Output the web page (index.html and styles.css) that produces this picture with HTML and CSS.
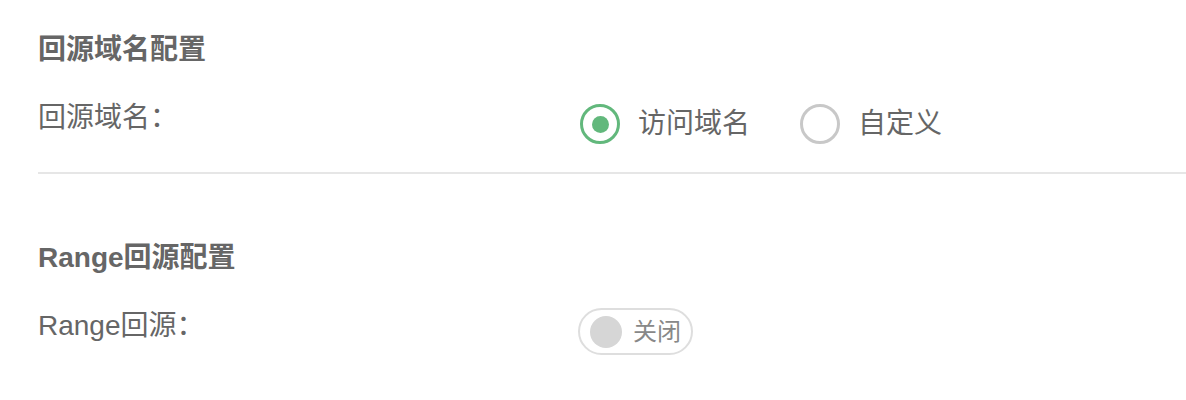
FILE: index.html
```html
<!DOCTYPE html>
<html lang="zh-CN">
<head>
  <meta charset="UTF-8">
  <meta name="viewport" content="width=device-width, initial-scale=1.0">
  <title>回源配置</title>
  <link rel="stylesheet" href="styles.css">
</head>
<body>

<div class="page">
  <!-- 回源域名 -->
  <div class="section">
    <div class="section-title">回源域名配置</div>
    <div class="form-row">
      <div class="form-label">回源域名：</div>
      <div class="form-control radios">
        <label class="radio checked">
          <span class="radio-dot"></span>
          <span class="radio-text">访问域名</span>
        </label>
        <label class="radio">
          <span class="radio-dot"></span>
          <span class="radio-text">自定义</span>
        </label>
      </div>
    </div>
  </div>

  <div class="divider"></div>

  <!-- Range回源 -->
  <div class="section">
    <div class="section-title">Range回源配置</div>
    <div class="form-row">
      <div class="form-label">Range回源：</div>
      <div class="form-control switch-wrap">
        <span class="switch">
          <span class="switch-knob"></span>
          <span class="switch-text">关闭</span>
        </span>
      </div>
    </div>
  </div>
</div>

</body>
</html>
```

FILE: styles.css
```css
body {
  margin: 0;
  padding: 0;
  background: #fff;
  font-family: "Liberation Sans", "Noto Sans CJK SC", sans-serif;
  color: #666;
}
.page {
  padding: 30px 0 0 38px;
}
.section-title {
  font-size: 28px;
  line-height: 40px;
  font-weight: bold;
  color: #666;
}
.form-row {
  display: flex;
  align-items: flex-start;
  margin-top: 28px;
}
.form-label {
  width: 542px;
  font-size: 28px;
  line-height: 40px;
  color: #666;
}
.divider {
  height: 2px;
  background: #e6e6e6;
  margin: 28px 0 64px;
}

/* 单选 */
.radios {
  display: flex;
  align-items: center;
  margin-top: 6px;
}
.radio {
  display: flex;
  align-items: center;
  margin-right: 50px;
  cursor: pointer;
}
.radio-dot {
  width: 40px;
  height: 40px;
  box-sizing: border-box;
  border: 3px solid #c8c8c8;
  border-radius: 50%;
  display: flex;
  align-items: center;
  justify-content: center;
}
.radio.checked .radio-dot {
  border-color: #62b87c;
}
.radio.checked .radio-dot::after {
  content: "";
  width: 17px;
  height: 17px;
  border-radius: 50%;
  background: #62b87c;
}
.radio-text {
  font-size: 28px;
  line-height: 40px;
  margin-left: 18px;
  color: #666;
}

/* 开关 */
.switch-wrap {
  margin: 2px 0 0 -2px;
}
.switch {
  display: inline-flex;
  align-items: center;
  box-sizing: border-box;
  width: 115px;
  height: 47px;
  padding: 0 10px;
  border: 2px solid #dedede;
  border-radius: 24px;
}
.switch-knob {
  width: 32px;
  height: 32px;
  border-radius: 50%;
  background: #d6d6d6;
}
.switch-text {
  font-size: 24px;
  line-height: 32px;
  margin-left: 11px;
  color: #888;
}
```
